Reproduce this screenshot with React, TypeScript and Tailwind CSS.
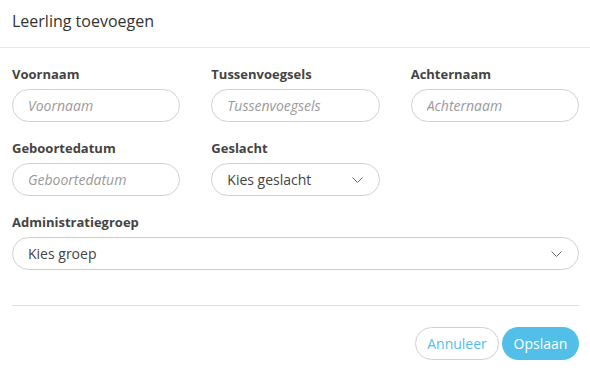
import React from "react";

function Chevron() {
  return (
    <svg width="11" height="6" viewBox="0 0 11 6" fill="none" className="shrink-0">
      <path d="M0.5 0.5L5.5 5.5L10.5 0.5" stroke="#666" strokeWidth="1" />
    </svg>
  );
}

function TextField({ label, placeholder }: { label: string; placeholder: string }) {
  return (
    <div className="flex flex-col">
      <label className="mb-[6px] text-[13px] font-bold leading-[18px] text-[#444]">{label}</label>
      <input
        type="text"
        placeholder={placeholder}
        className="h-[33px] w-full rounded-full border border-[#d0d0d0] bg-white px-[15px] text-[14px] text-[#444] outline-none placeholder:italic placeholder:text-[#9a9a9a]"
      />
    </div>
  );
}

function SelectField({ label, value }: { label: string; value: string }) {
  return (
    <div className="flex flex-col">
      <label className="mb-[6px] text-[13px] font-bold leading-[18px] text-[#444]">{label}</label>
      <button
        type="button"
        className="flex h-[33px] w-full items-center justify-between rounded-full border border-[#d0d0d0] bg-white pl-[15px] pr-[16px] text-left text-[14px] text-[#444]"
      >
        <span>{value}</span>
        <Chevron />
      </button>
    </div>
  );
}

export default function App() {
  return (
    <div
      className="h-[372px] w-[590px] bg-white"
      style={{ fontFamily: "'Open Sans', 'Noto Sans', sans-serif" }}
    >
      {/* Header */}
      <div className="h-[48px] border-b border-[#e6e6e6] pl-3 pt-[9px]">
        <h2 className="text-[16px] leading-[24px] text-[#333]">Leerling toevoegen</h2>
      </div>

      {/* Body */}
      <div className="pl-3 pr-[11px] pt-[17px]">
        <div className="grid grid-cols-3 gap-x-[31px] gap-y-[17px]">
          <TextField label="Voornaam" placeholder="Voornaam" />
          <TextField label="Tussenvoegsels" placeholder="Tussenvoegsels" />
          <TextField label="Achternaam" placeholder="Achternaam" />
          <TextField label="Geboortedatum" placeholder="Geboortedatum" />
          <SelectField label="Geslacht" value="Kies geslacht" />
          <div />
          <div className="col-span-3">
            <SelectField label="Administratiegroep" value="Kies groep" />
          </div>
        </div>

        {/* Footer */}
        <div className="mt-[35px] border-t border-[#dcdcdc] pt-[21px]">
          <div className="flex justify-end gap-[3px]">
            <button
              type="button"
              className="h-[33px] w-[84px] rounded-full border border-[#d0d0d0] bg-white text-[14px] text-[#52bfe9]"
            >
              Annuleer
            </button>
            <button
              type="button"
              className="h-[33px] w-[77px] rounded-full bg-[#52bfe9] text-[14px] text-white"
            >
              Opslaan
            </button>
          </div>
        </div>
      </div>
    </div>
  );
}
